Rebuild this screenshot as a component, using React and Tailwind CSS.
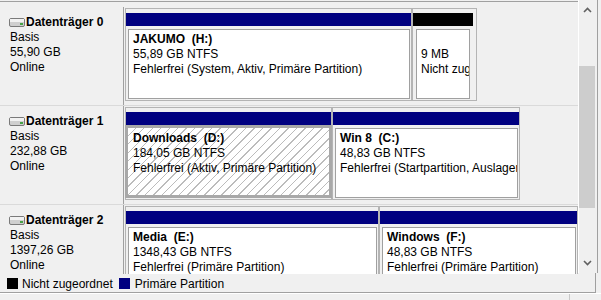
import React from 'react';

const disks = [
  {
    name: 'Datenträger 0',
    type: 'Basis',
    size: '55,90 GB',
    status: 'Online',
    parts: [
      { w: 'w-[287px]', bar: 'bg-[#000080]', title: 'JAKUMO  (H:)', size: '55,89 GB NTFS', info: 'Fehlerfrei (System, Aktiv, Primäre Partition)' },
      { w: 'w-[65px]', bar: 'bg-black', barMr: 'mr-[3px]', bodyM: 'ml-[3px] mr-[6px]', title: '', size: '9 MB', info: 'Nicht zugeordnet' },
    ],
  },
  {
    name: 'Datenträger 1',
    type: 'Basis',
    size: '232,88 GB',
    status: 'Online',
    parts: [
      { w: 'w-[207px]', bar: 'bg-[#000080]', title: 'Downloads  (D:)', size: '184,05 GB NTFS', info: 'Fehlerfrei (Aktiv, Primäre Partition)', selected: true },
      { w: 'w-[188px]', bar: 'bg-[#000080]', title: 'Win 8  (C:)', size: '48,83 GB NTFS', info: 'Fehlerfrei (Startpartition, Auslagerungsdatei, Absturzabbild, Primäre Partition)' },
    ],
  },
  {
    name: 'Datenträger 2',
    type: 'Basis',
    size: '1397,26 GB',
    status: 'Online',
    parts: [
      { w: 'w-[254px]', bar: 'bg-[#000080]', title: 'Media  (E:)', size: '1348,43 GB NTFS', info: 'Fehlerfrei (Primäre Partition)' },
      { w: 'w-[199px]', bar: 'bg-[#000080]', title: 'Windows  (F:)', size: '48,83 GB NTFS', info: 'Fehlerfrei (Primäre Partition)' },
    ],
  },
];

const DiskIcon = () => (
  <svg width="16" height="9" viewBox="0 0 16 9" className="shrink-0">
    <rect x="0.5" y="0.5" width="15" height="8" rx="1.5" fill="#cfcfcf" stroke="#7a7a7a" />
    <rect x="1" y="1" width="14" height="3" fill="#f2f2f2" />
    <rect x="11" y="5" width="3" height="2" fill="#46a346" />
  </svg>
);

const Partition = ({ p }) => (
  <div className={`${p.w} h-[93px] shrink-0 border border-[#b4b4b4] pt-[4px] pb-px flex flex-col`}>
    <div className={`h-[13px] ${p.bar} ${p.barMr || ''}`} />
    {p.selected ? (
      <div className="-mx-px h-[74px] border-[3px] border-[#a8a8a8] bg-white bg-[repeating-linear-gradient(135deg,#ffffff_0_5px,#bcbcbc_5px_6px)] pl-[5px] pt-[3px] overflow-hidden whitespace-pre">
        <div className="font-bold">{p.title}</div>
        <div>{p.size}</div>
        <div>{p.info}</div>
      </div>
    ) : (
      <div className={`mt-[3px] ${p.bodyM || 'ml-[2px] mr-px'} h-[70px] border border-[#a0a0a0] bg-white pl-[4px] pt-[2px] overflow-hidden whitespace-pre`}>
        <div className="font-bold h-[15px]">{p.title}</div>
        <div>{p.size}</div>
        <div>{p.info}</div>
      </div>
    )}
  </div>
);

const DiskRow = ({ d }) => (
  <div className="flex flex-col shrink-0">
    <div className="flex h-[98px]">
      <div className="w-[124px] shrink-0 border-r border-[#a0a0a0] pl-[10px] pt-[8px]">
        <div className="flex items-center gap-px font-bold -ml-px">
          <DiskIcon />
          <span>{d.name}</span>
        </div>
        <div>{d.type}</div>
        <div>{d.size}</div>
        <div>{d.status}</div>
      </div>
      <div className="flex pl-px pt-px">
        {d.parts.map((p, i) => (
          <Partition key={i} p={p} />
        ))}
      </div>
    </div>
    <div className="h-px bg-[#dadada]" />
  </div>
);

const Chevron = ({ down }) => (
  <svg width="9" height="6" viewBox="0 0 9 6">
    <polyline
      points={down ? '1,1 4.5,4.5 8,1' : '1,5 4.5,1.5 8,5'}
      fill="none"
      stroke="#606060"
      strokeWidth="1.6"
    />
  </svg>
);

export default function App() {
  return (
    <div className="w-[601px] h-[300px] bg-[#f0f0f0] overflow-hidden text-[12px] leading-[15px] text-black font-['Liberation_Sans',Arial,sans-serif] flex flex-col">
      <div className="flex h-[273px] shrink-0">
        <div className="w-[578px] h-[273px] shrink-0 overflow-hidden mt-px border-t border-[#a0a0a0] pt-[5px] flex flex-col">
          {disks.map((d) => (
            <DiskRow key={d.name} d={d} />
          ))}
        </div>
        <div className="w-[17px] shrink-0 pt-[2px] flex flex-col border-l border-white">
          <div className="h-[17px] flex items-center justify-center">
            <Chevron />
          </div>
          <div className="flex-1 flex flex-col pt-[48px] pb-[47px]">
            <div className="h-[142px] bg-[#cdcdcd]" />
            <div className="flex-1" />
          </div>
          <div className="h-[17px] flex items-center justify-center mb-[2px]">
            <Chevron down />
          </div>
        </div>
        <div className="flex-1 flex">
          <div className="w-[2px]" />
          <div className="w-px bg-[#a0a0a0]" />
        </div>
      </div>
      <div className="h-[20px] w-[596px] shrink-0 border-r border-b border-[#a0a0a0] flex items-start pt-[4px] pl-[7px]">
        <div className="w-[11px] h-[11px] bg-black mt-px" />
        <span className="ml-[4px]">Nicht zugeordnet</span>
        <div className="w-[11px] h-[11px] bg-[#000080] mt-px ml-[6px]" />
        <span className="ml-[5px]">Primäre Partition</span>
      </div>
      <div className="flex-1 flex border-t border-white">
        <div className="w-[570px] border-r border-[#c8c8c8]" />
      </div>
    </div>
  );
}
